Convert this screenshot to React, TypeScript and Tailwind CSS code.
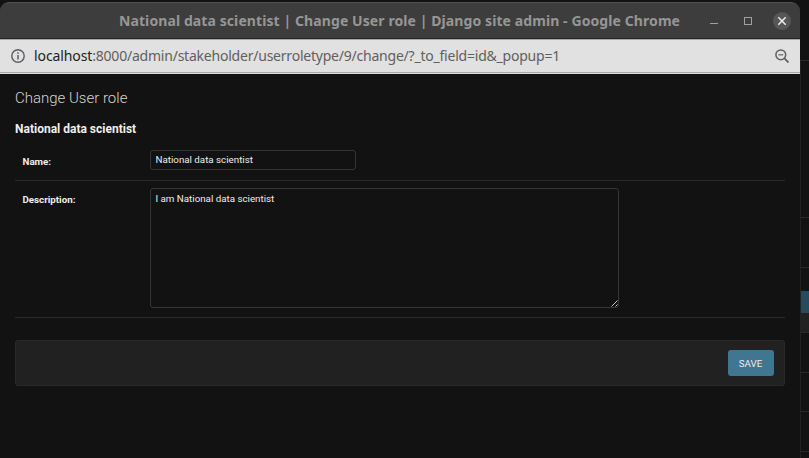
import React from 'react';

function TitleBar() {
  return (
    <header className="flex h-[36px] shrink-0 items-center rounded-t-[9px] border-t border-[#505050] bg-[#3d3d3d]">
      <h1 className="ml-[119px] w-[563px] whitespace-nowrap font-['Noto_Sans','Open_Sans',sans-serif] text-[14px] leading-[20px] font-bold tracking-[0.09px] text-[#969696]">
        National data scientist | Change User role | Django site admin - Google Chrome
      </h1>
      <div className="ml-[27px] flex items-center">
        <svg width="10" height="10" viewBox="0 0 10 10" shapeRendering="crispEdges">
          <path d="M1 7.5h8" stroke="#a0a0a0" />
        </svg>
        <svg className="ml-[24px]" width="10" height="10" viewBox="0 0 10 10" shapeRendering="crispEdges">
          <path d="M1.5 1.5h7v7h-7z" fill="none" stroke="#a0a0a0" />
        </svg>
        <svg className="ml-[20px]" width="18" height="18" viewBox="0 0 18 18">
          <circle cx="9" cy="9" r="9" fill="#575757" />
          <path d="M5.3 5.3l7.4 7.4M12.7 5.3l-7.4 7.4" stroke="#eeeeee" strokeWidth="1.5" />
        </svg>
      </div>
    </header>
  );
}

function AddressBar() {
  return (
    <div className="flex h-[34px] shrink-0 items-center border-t border-b border-t-[#a7a7a7] border-b-[#a9a9a9] bg-[#e1e1e1]">
      <svg className="ml-[11px] shrink-0" width="14" height="14" viewBox="0 0 14 14" fill="none">
        <circle cx="7" cy="7" r="6.2" stroke="#5b5d60" strokeWidth="1.4" />
        <path d="M7 6v4.5M7 3.3v1.5" stroke="#5b5d60" strokeWidth="1.5" />
      </svg>
      <p className="ml-[9px] w-[530px] whitespace-nowrap font-['Noto_Sans','Open_Sans',sans-serif] text-[14px] leading-[20px] tracking-[-0.22px] text-[#606060]">
        <span className="tracking-[-0.1px] text-[#202124]">localhost</span>:8000/admin/stakeholder/userroletype/9/change/?_to_field=id&amp;_popup=1
      </p>
      <svg className="ml-[211px] shrink-0" width="14" height="14" viewBox="0 0 14 14" fill="none" stroke="#606164">
        <circle cx="5.8" cy="5.8" r="4.9" strokeWidth="1.5" />
        <path d="M9.2 9.2l4.3 4.3" strokeWidth="1.8" />
        <path d="M3.4 5.8h4.8" strokeWidth="1.2" />
      </svg>
    </div>
  );
}

function ChangeForm() {
  return (
    <main className="flex grow flex-col pr-[15px] pl-[15px] font-[Roboto,sans-serif] text-[#eeeeee]">
      <h2 className="mt-[14px] text-[15px] leading-[20px] font-light text-[#d5d5d5]">Change User role</h2>
      <h3 className="mt-[13px] text-[12px] leading-[17px] font-bold">National data scientist</h3>
      <div className="mt-[5px] flex h-[38px] border-b border-[#2a2a2a] pt-[7px]">
        <label htmlFor="name" className="w-[135px] pt-[5px] pl-[7.5px] text-[9.75px] leading-[14px] font-bold">Name:</label>
        <input
          id="name"
          defaultValue="National data scientist"
          className="h-[20px] w-[206px] rounded-[3px] border border-[#353535] bg-[#121212] px-[4.5px] pb-[2px] text-[9.75px] leading-[16px] outline-none"
        />
      </div>
      <div className="flex h-[137px] border-b border-[#2a2a2a] pt-[7px]">
        <label htmlFor="description" className="w-[135px] pt-[5px] pl-[7.5px] text-[9.75px] leading-[14px] font-bold">Description:</label>
        <div className="relative h-[120px] w-[469px]">
          <textarea
            id="description"
            defaultValue="I am National data scientist"
            className="block h-full w-full resize-none rounded-[3px] border border-[#353535] bg-[#121212] px-[4.5px] py-[4px] text-[9.75px] leading-[12px] outline-none"
          />
          <svg className="absolute right-[1px] bottom-[1px]" width="7" height="7" viewBox="0 0 7 7" stroke="#c8c8c8">
            <path d="M.5 6.5l6-6M4.5 6.5l2-2" />
          </svg>
        </div>
      </div>
      <div className="mt-[22px] flex h-[46px] items-center justify-end rounded-[3px] border border-[#292929] bg-[#212121] pr-[10px]">
        <button className="h-[26px] w-[46px] rounded-[3px] bg-[#417690] pt-[2px] pr-[1px] text-[9.75px] text-[#eeeeee]">SAVE</button>
      </div>
    </main>
  );
}

function BackgroundPage() {
  return (
    <aside className="flex w-[9px] shrink-0 flex-col bg-[#121212]">
      <div className="h-[61px] border-b border-[#292929]" />
      <div className="flex grow flex-col border-l border-[#222222]">
        <div className="h-[157px] border-b border-[#292929]" />
        <div className="h-[50px] border-b border-[#292929]" />
        <div className="h-[23px]" />
        <div className="h-[22px] bg-[#264b5d]" />
        <div className="h-[20px] border-b border-[#292929] bg-[#212121]" />
        <div className="h-[40px] border-b border-[#292929]" />
        <div className="h-[39px] border-b border-[#292929]" />
        <div className="h-[40px] border-b border-[#292929]" />
      </div>
    </aside>
  );
}

export default function App() {
  return (
    <div className="flex h-[458px] w-[809px] overflow-hidden bg-[#121212]">
      <div className="flex w-[800px] shrink-0 flex-col pt-[2px]">
        <TitleBar />
        <div className="h-px shrink-0 bg-[#252525]" />
        <AddressBar />
        <div className="h-px shrink-0 bg-[#d8dcda]" />
        <ChangeForm />
      </div>
      <BackgroundPage />
    </div>
  );
}
